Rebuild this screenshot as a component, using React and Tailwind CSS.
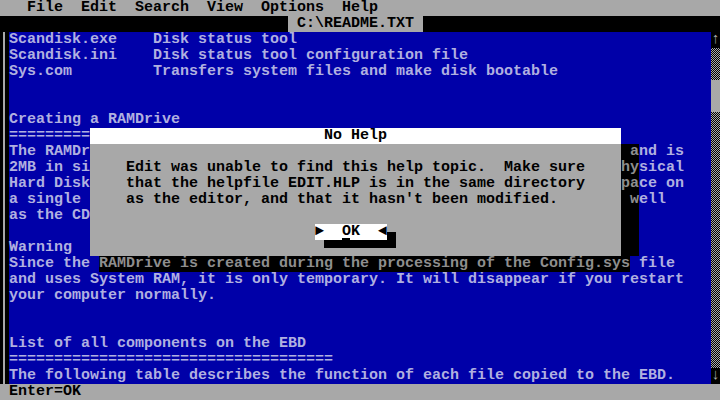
import React from "react";

// rows 2..23 of the 80x25 text screen, text starts at column 1
const lines = [
    "Scandisk.exe    Disk status tool",
    "Scandisk.ini    Disk status tool configuration file",
    "Sys.com         Transfers system files and make disk bootable",
    "",
    "",
    "Creating a RAMDrive",
    "=========",
    // rows under the dialog: visible head, then the two shadow cells, then the rest
    { head: "The RAMDr", shadow: " a", tail: "nd is" },
    { head: "2MB in si", shadow: "hy", tail: "sical" },
    { head: "Hard Disk", shadow: "pa", tail: "ce on" },
    { head: "a single", shadow: " w", tail: "ell" },
    { head: "as the CD", shadow: "  ", tail: "" },
    { head: "", shadow: "  ", tail: "" },
    { head: "Warning", shadow: "  ", tail: "" },
    { head: "Since the ", bottom: "RAMDrive is created during the processing of the Config.sys", tail: " file" },
    "and uses System RAM, it is only temporary. It will disappear if you restart",
    "your computer normally.",
    "",
    "",
    "List of all components on the EBD",
    "====================================",
    "The following table describes the function of each file copied to the EBD.",
];

function Line({ line }) {
    if (typeof line === "string") {
        return <div className="h-4 whitespace-pre">{line}</div>;
    }
    if (line.bottom) {
        return (
            <div className="h-4 whitespace-pre">
                <span>{line.head}</span>
                <span className="bg-black text-[#8e8e8e]">{line.bottom}</span>
                <span>{line.tail}</span>
            </div>
        );
    }
    return (
        <div className="h-4 flex whitespace-pre">
            <span className="w-[612px]">{line.head}</span>
            <span className="w-[18px] bg-black text-[#8e8e8e]">{line.shadow}</span>
            <span>{line.tail}</span>
        </div>
    );
}

export default function App() {
    return (
        <div className="relative w-[720px] h-[400px] overflow-hidden bg-black font-['Liberation_Mono','DejaVu_Sans_Mono',monospace] font-bold text-[15px] leading-4">
            {/* menu bar */}
            <div className="h-4 bg-[#a8a8a8] text-black whitespace-pre">
                {"   File  Edit  Search  View  Options  Help"}
            </div>

            {/* window title */}
            <div className="flex h-4 bg-black">
                <div className="w-[288px] h-4">
                    <div className="ml-[3px] mt-[23px] h-[9px] border-l-2 border-t-2 border-[#a8a8a8]"></div>
                </div>
                <div className="w-[135px] h-4 bg-[#a8a8a8] text-black whitespace-pre">{" C:\\README.TXT "}</div>
                <div className="flex-1 h-4">
                    <div className="mr-[5px] mt-[23px] h-[9px] border-r-2 border-t-2 border-[#a8a8a8]"></div>
                </div>
            </div>

            {/* editor */}
            <div className="flex h-[352px]">
                <div className="w-[9px] h-full bg-black">
                    <div className="ml-[3px] w-[2px] h-full bg-[#a8a8a8]"></div>
                </div>
                <div className="w-[702px] h-full bg-[#0000a8] text-[#b0b0e0]">
                    {lines.map((l, i) => (
                        <Line key={i} line={l} />
                    ))}
                </div>
                <div className="w-[9px] h-full flex flex-col bg-black text-[#a8a8a8]">
                    <div className="h-4 text-center">↑</div>
                    <div className="h-8 bg-[image:repeating-conic-gradient(#a8a8a8_0_25%,#000_0_50%)] bg-[length:2px_2px]"></div>
                    <div className="h-8 bg-[#a8a8a8]"></div>
                    <div className="flex-1 bg-[image:repeating-conic-gradient(#a8a8a8_0_25%,#000_0_50%)] bg-[length:2px_2px]"></div>
                    <div className="h-4 text-center">↓</div>
                </div>
            </div>

            {/* status bar */}
            <div className="h-4 bg-[#a8a8a8] text-black whitespace-pre">{" Enter=OK"}</div>

            {/* No Help dialog */}
            <div className="absolute left-[90px] top-[128px] w-[531px] text-black">
                <div className="h-4 bg-white text-center">No Help</div>
                <div className="h-[112px] bg-[#a8a8a8] pt-4">
                    <div className="pl-[36px] whitespace-pre">
                        <div className="h-4">Edit was unable to find this help topic.  Make sure</div>
                        <div className="h-4">that the helpfile EDIT.HLP is in the same directory</div>
                        <div className="h-4">as the editor, and that it hasn't been modified.</div>
                    </div>
                    <div className="h-4"></div>
                    <div className="flex ml-[225px]">
                        <div className="relative w-[72px] h-4 bg-white whitespace-pre">
                            {"►  OK  ◄"}
                            <div className="absolute left-[27px] top-[14px] w-[8px] h-[2px] bg-black"></div>
                        </div>
                        <div className="w-[9px] h-4 flex flex-col">
                            <div className="h-2"></div>
                            <div className="h-2 bg-black"></div>
                        </div>
                    </div>
                    <div className="ml-[234px] w-[72px] h-2 bg-black"></div>
                </div>
            </div>
        </div>
    );
}
